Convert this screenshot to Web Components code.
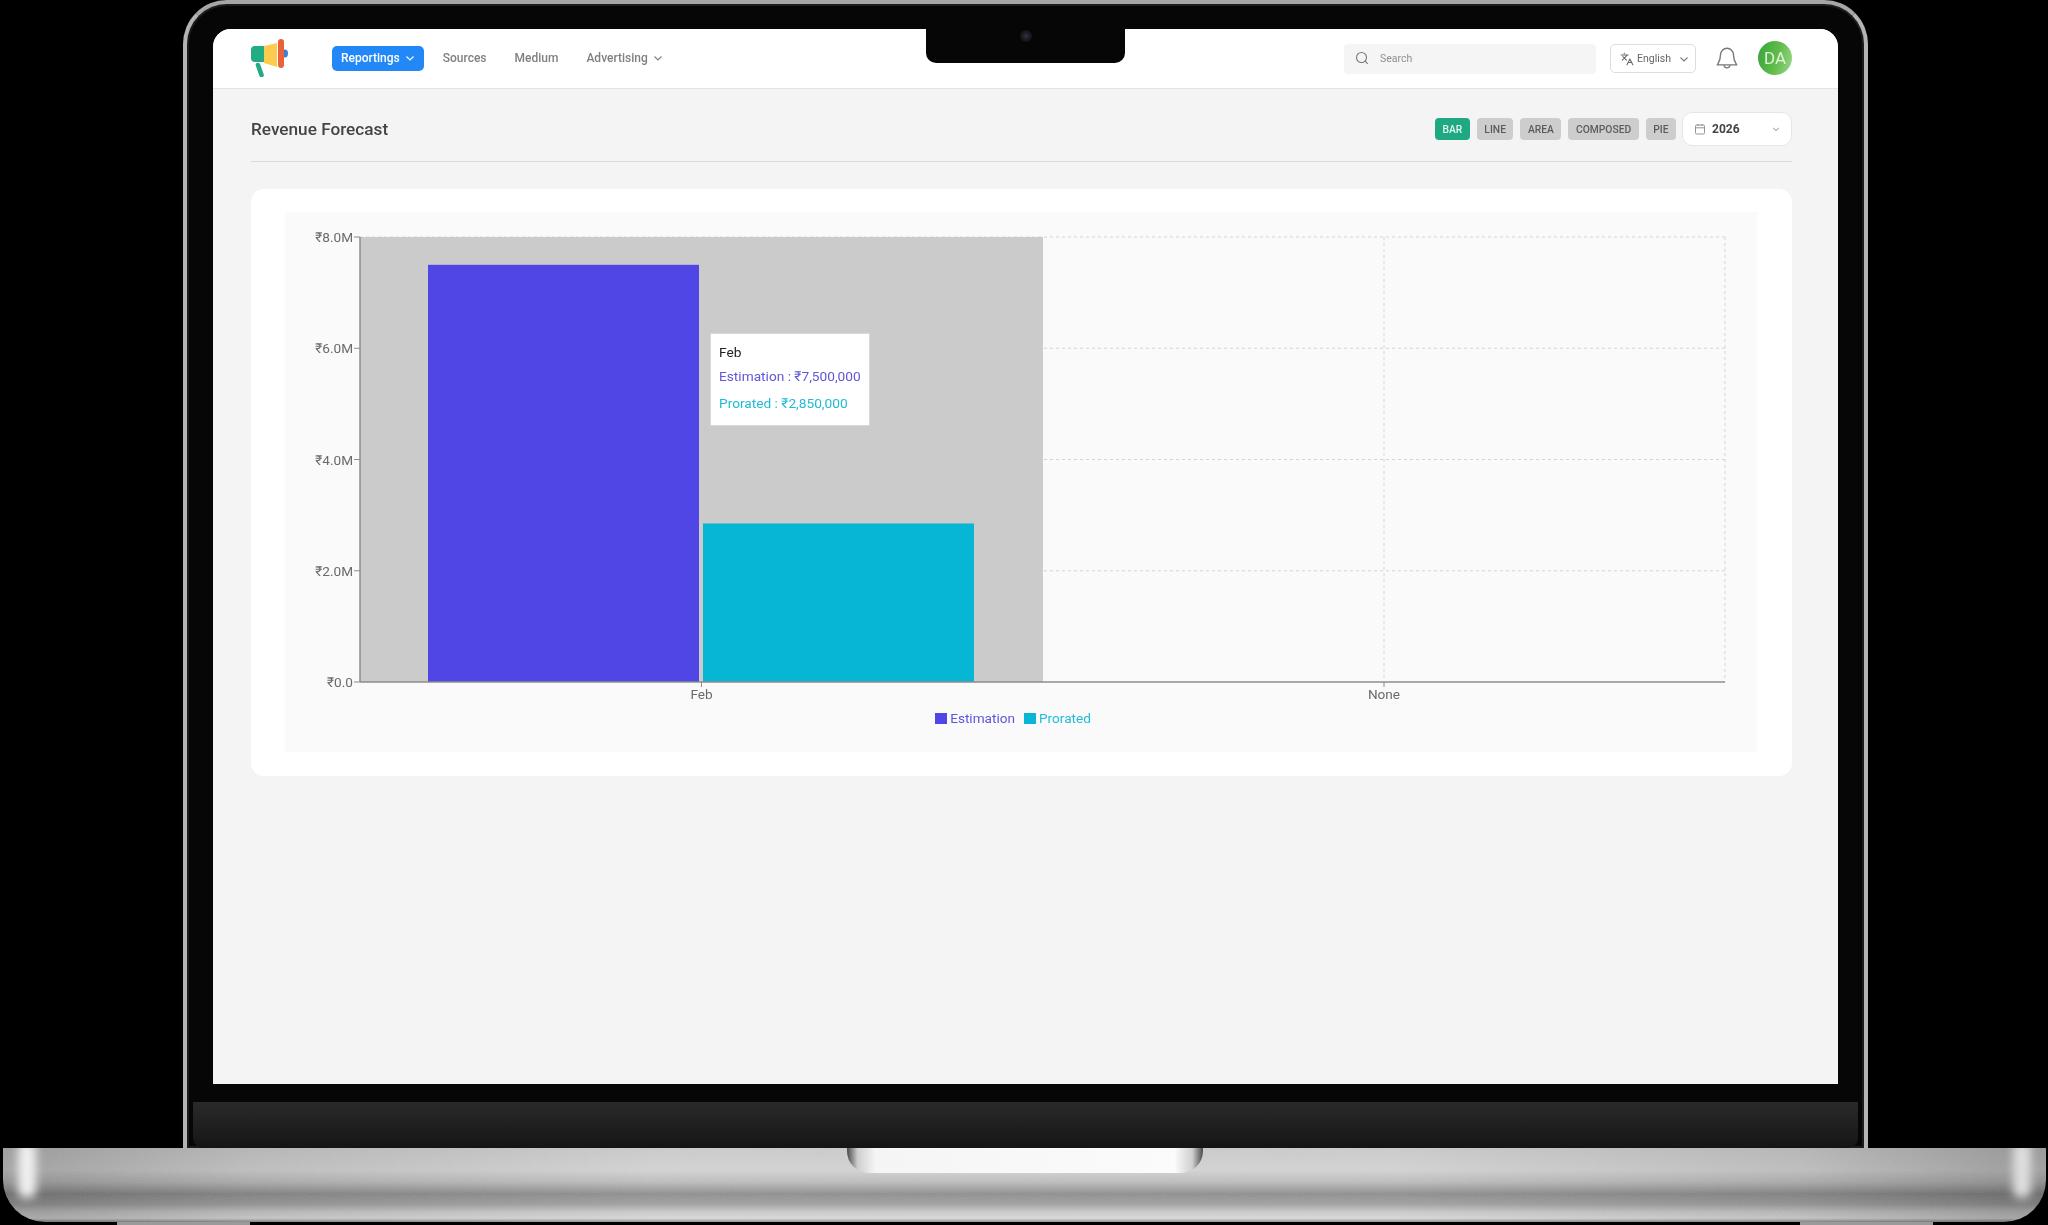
<!DOCTYPE html>
<html>
<head>
<meta charset="utf-8">
<title>Revenue Forecast</title>
<style>
      html,body {margin:0;padding:0;background:#000;width:2048px;height:1225px;overflow:hidden;font-family:Roboto,"Liberation Sans",sans-serif}
</style>
</head>
<body>

<template id=laptop-frame-template>
      <style>
            :host {display:flex;flex-direction:column;width:2048px;height:1225px;background:#000}
            .lid {box-sizing:border-box;margin-left:183px;width:1685px;height:1148px;display:flex;flex-direction:column;
                  background:#060606;border:4px solid #b4b4b4;border-top-color:#a6a6a6;border-bottom:0;border-radius:44px 44px 0 0;
                  box-shadow:inset 0 0 0 2px #1c1c1c;padding-top:25px}
            .screen {position:relative;box-sizing:border-box;width:1625px;height:1055px;margin-left:26px;background:#f4f4f4;border-radius:18px 18px 0 0;overflow:hidden}
            .notch {position:absolute;top:0;left:713px;width:199px;height:34px;background:#060606;border-radius:0 0 10px 10px;
                    display:flex;align-items:flex-start;justify-content:center}
            .cam {width:12px;height:12px;border-radius:50%;margin-top:1px;background:radial-gradient(circle,#33334a 0,#1a1a22 45%,#0a0a0c 100%)}
            .gap {height:18px;flex:none}
            .chin {flex:1;margin:0 6px;background:linear-gradient(#2a2a2a,#151515);border-radius:0 0 10px 10px}
            .base {position:relative;display:flex;justify-content:center;height:74px;margin:0 2px 0 3px;border-radius:0 0 42px 42px;overflow:hidden;
                   background:
                     linear-gradient(90deg,rgba(0,0,0,.22) 2%,rgba(0,0,0,.1) 12%,transparent 32%,transparent 68%,rgba(0,0,0,.1) 88%,rgba(0,0,0,.24) 98%),
                     linear-gradient(#c9c9c9 0,#d2d2d2 30%,#bcbcbc 46%,#8f8f8f 62%,#a2a2a2 76%,#c8c8c8 86%,#d8d8d8 95%,#8f8f8f 100%)}
            .noise {position:absolute;left:0;top:0;opacity:.13;mix-blend-mode:overlay}
            .shine {position:absolute;top:-6px;width:18px;height:56px;background:#f0f0f0;filter:blur(5px);border-radius:8px}
            .shine.l {left:15px}
            .shine.r {right:15px;background:#dedede}
            .thumb {position:relative;width:356px;height:25px;border-radius:0 0 22px 22px;
                    background:linear-gradient(90deg,#4a4a4a 0,#cfcfcf 3%,#f5f5f5 8%,#fbfbfb 92%,#cfcfcf 97%,#4a4a4a 100%)}
            .feet {display:flex;justify-content:space-between;height:3px;padding:0 115px 0 117px}
            .feet span {width:133px;background:#9a9a9a}
      </style>
      <div class=lid>
            <div class=screen>
                  <slot></slot>
                  <div class=notch><div class=cam></div></div>
            </div>
            <div class=gap></div>
            <div class=chin></div>
      </div>
      <div class=base>
            <svg class=noise width=2043 height=74>
                  <filter id=grain><feTurbulence type=fractalNoise baseFrequency=".7" numOctaves=2 /><feColorMatrix type=saturate values=0 /></filter>
                  <rect width=2043 height=74 filter="url(#grain)"/>
            </svg>
            <div class="shine l"></div>
            <div class="shine r"></div>
            <div class=thumb></div>
      </div>
      <div class=feet><span></span><span></span></div>
</template>

<template id=app-header-template>
      <style>
            :host {display:flex;align-items:center;box-sizing:border-box;height:60px;padding:0 46px 0 36px;background:#fff;border-bottom:1px solid #e4e4e4}
            svg {display:block}
            .logo {margin-right:43px;margin-top:-2px}
            nav {display:flex;gap:10px;align-items:center}
            .right {margin-left:auto;display:flex;align-items:center}
      </style>
      <svg class=logo width=40 height=38 viewBox="0 0 40 38">
            <ellipse cx=36 cy=14.5 rx=3 ry=4 fill="#3f7fd9"/>
            <path d="M15 7H6a4 4 0 0 0-4 4v8a4 4 0 0 0 4 4h9z" fill="#22ab84"/>
            <path d="M9 26l3.5 10" stroke="#22ab84" stroke-width="4.6" stroke-linecap="round"/>
            <path d="M15 7l13-3v24l-13-4z" fill="#fdcb4e"/>
            <rect x=29 y=0 width=6 height=29 rx=3 fill="#ec6238"/>
      </svg>
      <nav><slot name=nav></slot></nav>
      <div class=right><slot></slot></div>
</template>

<template id=nav-item-template>
      <style>
            :host {display:inline-flex;align-items:center;box-sizing:border-box;height:25px;padding:0 9px 1px;border-radius:5px;
                   font:500 12px Roboto,sans-serif;color:#808080;gap:5px;white-space:nowrap}
            :host([active]) {background:#2288f7;color:#fff}
            svg {display:none}
            :host([caret]) svg {display:block}
      </style>
      <slot></slot>
      <svg width=10 height=10 viewBox="0 0 10 10" fill=none stroke=currentColor stroke-width=1.2><path d="M1.5 3.5L5 7l3.5-3.5"/></svg>
</template>

<template id=search-box-template>
      <style>
            :host {display:flex;align-items:center;box-sizing:border-box;width:252px;height:30px;padding:0 0 1px 11px;gap:11px;
                   background:#f5f5f5;border-radius:4px;font:400 10.500px Roboto,sans-serif;color:#8e8e8e}
      </style>
      <svg width=14 height=14 viewBox="0 0 14 14" fill=none stroke="#777" stroke-width=1.1><circle cx=6.5 cy=6.5 r=5 /><path d="M10.2 10.2L12.8 12.8"/></svg>
      <slot></slot>
</template>

<template id=lang-select-template>
      <style>
            :host {display:flex;align-items:center;box-sizing:border-box;width:86px;height:29px;margin-left:14px;padding-left:9px;gap:3px;
                   background:#fff;border:1px solid #ddd;border-radius:5px;font:400 10.500px Roboto,sans-serif;color:#666}
      </style>
      <svg width=14 height=14 viewBox="0 0 24 24" fill=none stroke="#666" stroke-width=1.8 stroke-linecap=round stroke-linejoin=round>
            <path d="M5 8l6 6M4 14l6-6 2-3M2 5h12M7 2h1M22 22l-5-10-5 10M14 18h6"/>
      </svg>
      <slot></slot>
      <svg style="margin-left:5px" width=10 height=10 viewBox="0 0 10 10" fill=none stroke="#777" stroke-width=1.1><path d="M1.5 3.5L5 7l3.5-3.5"/></svg>
</template>

<template id=bell-button-template>
      <style>
            :host {display:block;margin:-1px 0 0 18px;height:26px}
            svg {display:block}
      </style>
      <svg width=26 height=26 viewBox="0 0 24 24" fill=none stroke="#777" stroke-width=1.25 stroke-linecap=round stroke-linejoin=round>
            <path d="M18 9A6 6 0 0 0 6 9c0 6-2.6 8-3 9.400h18c-.4-1.400-3-3.400-3-9.400"/>
            <path d="M9.300 19a2.800 2.800 0 0 0 5.400 0"/>
      </svg>
</template>

<template id=user-avatar-template>
      <style>
            :host {display:flex;align-items:center;justify-content:center;width:34px;height:34px;margin:-1px 0 0 18px;border-radius:50%;
                   background:linear-gradient(105deg,#35a33c 0,#62bd4a 55%,#9bd88e 100%);color:#e0f2da;font:400 17px Roboto,sans-serif}
      </style>
      <slot></slot>
</template>

<template id=page-head-template>
      <style>
            :host {display:flex;align-items:center;box-sizing:border-box;height:50px;padding-bottom:15px;border-bottom:1px solid #ddd;
                   font:500 17.200px Roboto,sans-serif;color:#444}
            .tools {margin-left:auto;display:flex;align-items:center;gap:7px}
      </style>
      <slot name=title></slot>
      <div class=tools><slot></slot></div>
</template>

<template id=chart-toggle-template>
      <style>
            :host {display:flex;align-items:center;box-sizing:border-box;height:22px;padding:0 7.500px;border-radius:4px;background:#cdcdcd;
                   color:#5c5c5c;font:500 10.300px Roboto,sans-serif;white-space:nowrap}
            :host([active]) {background:#1fa982;color:#e3f6ef}
      </style>
      <slot></slot>
</template>

<template id=year-picker-template>
      <style>
            :host {display:flex;align-items:center;box-sizing:border-box;width:110px;height:34px;margin-left:-1px;padding:0 11px 1px;gap:6px;
                   background:#fff;border:1px solid #e6e6e6;border-radius:10px;font:700 12px Roboto,sans-serif;color:#444}
            .c {margin-left:auto}
      </style>
      <svg width=12 height=12 viewBox="0 0 12 12" fill=none stroke="#888" stroke-width=.9><rect x=1.500 y=2 width=9 height=9 rx=1.200 /><path d="M1.500 4.800h9M4 1v2M8 1v2"/></svg>
      <slot></slot>
      <svg class=c width=8 height=8 viewBox="0 0 10 10" fill=none stroke="#aaa" stroke-width=1.300><path d="M1.500 3.500L5 7l3.500-3.500"/></svg>
</template>

<template id=chart-card-template>
      <style>
            :host {display:block;box-sizing:border-box;height:587px;margin-top:27px;padding:23px 35px 24px 34px;background:#fff;border-radius:13px}
      </style>
      <slot></slot>
</template>

<template id=chart-tooltip-template>
      <style>
            :host {position:absolute;left:425px;top:121px;box-sizing:border-box;width:160px;height:93px;padding:8px 8px;
                   background:#fff;border:1px solid #d8d8d8;font:400 13.700px Roboto,sans-serif;line-height:21px;color:#222;white-space:nowrap}
            .row {margin-top:6px}
            .first {margin-top:3px}
            .a {color:#6157d8}
            .b {color:#20bcd6}
      </style>
      <div><slot name=label></slot></div>
      <div class="row first a"><slot name=est></slot></div>
      <div class="row b"><slot name=pro></slot></div>
</template>

<template id=revenue-chart-template>
      <style>
            :host {display:block;position:relative;width:1472px;height:540px;background:#fafafa;font-family:Roboto,sans-serif}
            svg {display:block}
            text {font:400 13.600px Roboto,sans-serif;fill:#6a6a6a}
            .legend {position:absolute;left:0;right:0;top:498px;display:flex;justify-content:center;gap:9px;font:400 13.600px Roboto,sans-serif;padding-right:16px}
            .legend span {display:flex;align-items:center;gap:3px}
            .legend i {display:block;width:12px;height:11px}
      </style>
      <svg width=1472 height=540></svg>
      <div class=legend>
            <span style="color:#5f55dd"><i style="background:#4f46e5"></i>Estimation</span>
            <span style="color:#22bcd8"><i style="background:#06b6d4"></i>Prorated</span>
      </div>
      <slot></slot>
</template>

<laptop-frame>
      <app-header>
            <nav-item slot=nav active caret>Reportings</nav-item>
            <nav-item slot=nav>Sources</nav-item>
            <nav-item slot=nav>Medium</nav-item>
            <nav-item slot=nav caret>Advertising</nav-item>
            <search-box>Search</search-box>
            <lang-select>English</lang-select>
            <bell-button></bell-button>
            <user-avatar>DA</user-avatar>
      </app-header>
      <div style="padding:23px 46px 0 38px">
            <page-head>
                  <span slot=title>Revenue Forecast</span>
                  <chart-toggle active>BAR</chart-toggle>
                  <chart-toggle>LINE</chart-toggle>
                  <chart-toggle>AREA</chart-toggle>
                  <chart-toggle>COMPOSED</chart-toggle>
                  <chart-toggle>PIE</chart-toggle>
                  <year-picker>2026</year-picker>
            </page-head>
            <chart-card>
                  <revenue-chart>
                        <chart-tooltip>
                              <span slot=label>Feb</span>
                              <span slot=est>Estimation : ₹7,500,000</span>
                              <span slot=pro>Prorated : ₹2,850,000</span>
                        </chart-tooltip>
                  </revenue-chart>
            </chart-card>
      </div>
</laptop-frame>

<script>

      // every element here is just a template cloned into an open shadow root
      var names = ['laptop-frame','app-header','nav-item','search-box','lang-select','bell-button','user-avatar',
                   'page-head','chart-toggle','year-picker','chart-card','chart-tooltip'];

      names.forEach(name=>{

            customElements.define(name,class extends HTMLElement {
                  constructor() {
                        super();
                        var shadow    = this.attachShadow({mode:'open'});
                        shadow.appendChild(document.getElementById(name+'-template').content.cloneNode(true));
                  }//constructor
            });

      });


      class revenueChart extends HTMLElement {

            constructor() {
                  super();
                  var shadow    = this.attachShadow({mode:'open'});
                  shadow.appendChild(document.getElementById('revenue-chart-template').content.cloneNode(true));

                  // plot box, relative to the chart's own corner
                  var left = 75, right = 1440, top = 25, bottom = 470;
                  var step = (bottom-top)/4;
                  var mid  = (left+right)/2;
                  var y    = v=>bottom-(bottom-top)*v/8000000;
                  var s    = '';

                  for(var i=0;i<4;i++){
                        s += `<line x1=${left} x2=${right} y1=${top+i*step} y2=${top+i*step} stroke="#d4d4d4" stroke-dasharray="3 3"/>`;
                  }
                  [mid+341.5,right].forEach(x=>{
                        s += `<line x1=${x} x2=${x} y1=${top} y2=${bottom} stroke="#d4d4d4" stroke-dasharray="3 3"/>`;
                  });

                  // hover band and the two bars of Feb
                  s += `<rect x=${left} y=${top} width=683 height=${bottom-top} fill="#cbcbcb"/>`;
                  s += `<rect x=143 y=${y(7500000)} width=271 height=${bottom-y(7500000)} fill="#4f46e5"/>`;
                  s += `<rect x=418 y=${y(2850000)} width=271 height=${bottom-y(2850000)} fill="#06b6d4"/>`;

                  // axes
                  s += `<line x1=${left} x2=${left} y1=${top} y2=${bottom} stroke="#8c8c8c" stroke-width=1.500 />`;
                  s += `<line x1=${left} x2=${right} y1=${bottom} y2=${bottom} stroke="#8c8c8c" stroke-width=1.500 />`;

                  ['₹0.0','₹2.0M','₹4.0M','₹6.0M','₹8.0M'].forEach((t,i)=>{
                        var yy = bottom-i*step;
                        s += `<line x1=${left-6} x2=${left} y1=${yy} y2=${yy} stroke="#8c8c8c"/>`;
                        s += `<text x=${left-7} y=${yy+5} text-anchor=end>${t}</text>`;
                  });
                  [['Feb',416.5],['None',1099]].forEach(([t,x])=>{
                        s += `<line x1=${x} x2=${x} y1=${bottom} y2=${bottom+5} stroke="#8c8c8c"/>`;
                        s += `<text x=${x} y=${bottom+17} text-anchor=middle>${t}</text>`;
                  });

                  shadow.querySelector('svg').innerHTML = s;

            }//constructor

      }//class

      customElements.define('revenue-chart',revenueChart);

</script>
</body>
</html>
